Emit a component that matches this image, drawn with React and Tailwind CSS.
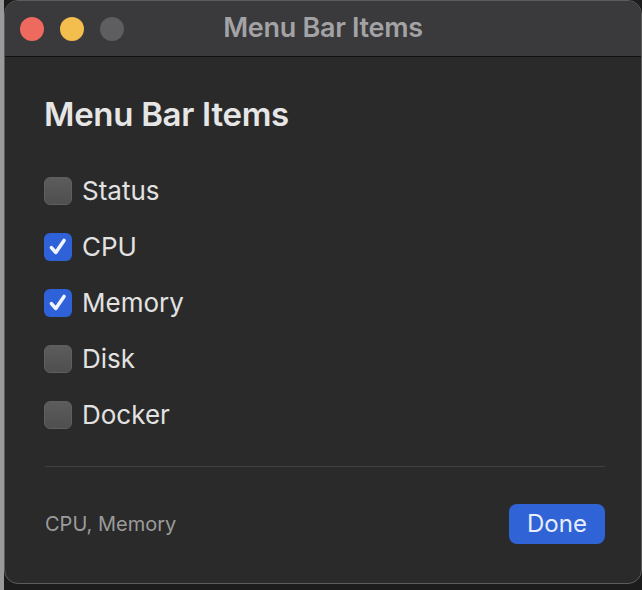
import React, { useState } from 'react'

const items = ['Status', 'CPU', 'Memory', 'Disk', 'Docker']

const Checkbox = ({ checked, label, onToggle }) => (
    <button onClick={onToggle} className="flex items-center gap-[10px] h-[56px] text-left">
        {checked ? (
            <span className="w-[28px] h-[28px] rounded-[6px] bg-[#2f62d9] flex items-center justify-center">
                <svg width="22" height="22" viewBox="0 0 20 20" fill="none">
                    <path d="M4 10.5 L8 15 L15.5 4" stroke="#f2f5ff" strokeWidth="3.2" strokeLinecap="round" strokeLinejoin="round" />
                </svg>
            </span>
        ) : (
            <span className="w-[28px] h-[28px] rounded-[6px] bg-gradient-to-b from-[#5c5c5c] to-[#4f4f4f] border border-[#5f5f5f]" />
        )}
        <span className="text-[26px] text-[#e2e2e2] leading-none">{label}</span>
    </button>
)

export default function App() {
    const [checked, setChecked] = useState({ CPU: true, Memory: true })
    const selected = items.filter((i) => checked[i])

    return (
        <div className="w-[642px] h-[590px] bg-[#1c1c1c] flex overflow-hidden" style={{ fontFamily: 'Inter, "Noto Sans", sans-serif' }}>
            {/* desktop strip */}
            <div className="w-[4px] h-full bg-[#9a9a9a]" />

            {/* WINDOW */}
            <div className="w-[638px] h-[584px] rounded-[14px] border border-[#5c5c5c] bg-[#2a2a2a] overflow-hidden flex flex-col">

                {/* TITLE BAR */}
                <div className="h-[56px] shrink-0 bg-[#3a393b] border-b border-[#111111] flex items-center relative">
                    <div className="flex gap-[16px] pl-[15px]">
                        <span className="w-[24px] h-[24px] rounded-full bg-[#ee6a5f]" />
                        <span className="w-[24px] h-[24px] rounded-full bg-[#f4be4f]" />
                        <span className="w-[24px] h-[24px] rounded-full bg-[#5e5d60]" />
                    </div>
                    <div className="absolute inset-0 flex items-center justify-center pointer-events-none">
                        <span className="text-[27px] font-semibold text-[#a3a2a5] tracking-[-0.3px]">Menu Bar Items</span>
                    </div>
                </div>

                {/* CONTENT */}
                <div className="flex-1 px-[39px] pt-[41px] flex flex-col">
                    <h1 className="text-[33px] font-semibold text-[#e6e6e6] leading-none tracking-[-0.3px] mb-[32px]">
                        Menu Bar Items
                    </h1>

                    <div className="flex flex-col">
                        {items.map((item) => (
                            <Checkbox
                                key={item}
                                label={item}
                                checked={!!checked[item]}
                                onToggle={() => setChecked({ ...checked, [item]: !checked[item] })}
                            />
                        ))}
                    </div>

                    <div className="mt-[23px] ml-[1px] mr-[-3px] h-px bg-[#3f3f3f]" />

                    <div className="flex items-center justify-between pt-[37px] ml-[1px] mr-[-3px]">
                        <span className="text-[20px] text-[#9b9b9b]">{selected.join(', ')}</span>
                        <button className="w-[96px] h-[40px] rounded-[8px] bg-[#2f63d6] text-[24px] text-[#e8edff] leading-none">
                            Done
                        </button>
                    </div>
                </div>
            </div>
        </div>
    )
}
